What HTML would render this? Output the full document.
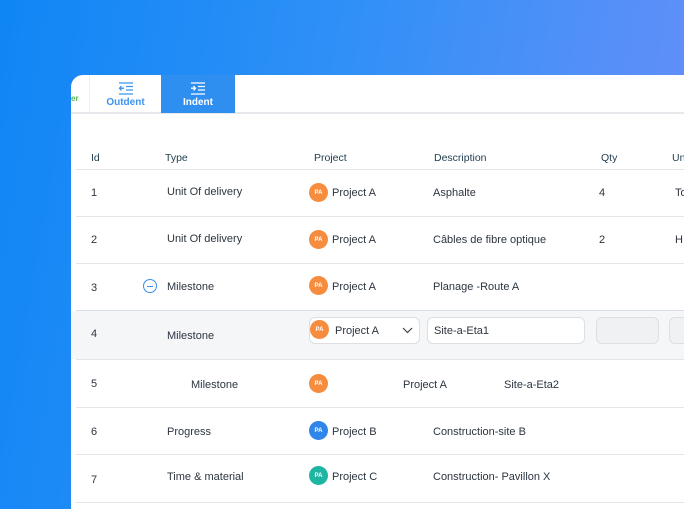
<!DOCTYPE html>
<html><head><style>
*{margin:0;padding:0;box-sizing:border-box}
html,body{width:684px;height:509px;overflow:hidden}
body{font-family:"Liberation Sans",sans-serif;background:linear-gradient(100deg,#0f86f5 0%,#2f90f7 45%,#6a8ff8 100%);position:relative}
.panel{position:absolute;left:71px;top:75px;width:613px;height:434px;background:#fff;border-top-left-radius:12px;overflow:hidden}
.tb{position:absolute;left:0;top:0;height:39px;width:640px;border-bottom:2px solid #e6e8eb}
.tab{position:absolute;top:0;height:38px;text-align:center;font-size:10px;font-weight:bold}
.t1{left:18px;width:72px;color:#3b93ee;border-left:1px solid #eceef0}
.t2{left:90px;width:74px;background:#2e8ff0;color:#fff}
.tab svg{display:block;margin:7px auto 2px}
.h{position:absolute;top:77px;font-size:10.5px;color:#1e3d4e}
.line{position:absolute;left:5px;width:640px;height:1px;background:#e3e5e8}
.c{position:absolute;font-size:11px;color:#2c3540;white-space:nowrap}
.av{position:absolute;width:19px;height:19px;border-radius:50%;color:#fff;font-size:6px;font-weight:bold;display:flex;align-items:center;justify-content:center}
.o{background:#f68c3e}.b{background:#2e86ea}.g{background:#1fb5a3}
</style></head><body>
<div class="panel">
<div class="tb">
<div style="position:absolute;left:0;top:19px;font-size:8px;color:#5ab552;font-weight:bold">er</div>
<div class="tab t1"><svg width="16" height="13" viewBox="0 0 16 13" fill="none" stroke="#3b93ee" stroke-width="1.3"><path d="M1 1h14M8 4.5h7M8 8h7M1 12h14M6 6.2H1.5M3.5 4l-2 2.2 2 2.2"/></svg>Outdent</div>
<div class="tab t2"><svg width="16" height="13" viewBox="0 0 16 13" fill="none" stroke="#fff" stroke-width="1.3"><path d="M1 1h14M8 4.5h7M8 8h7M1 12h14M1 6.2h4.5M3.5 4l2 2.2-2 2.2"/></svg>Indent</div>
</div>
<div class="h" style="left:20px">Id</div>
<div class="h" style="left:94px">Type</div>
<div class="h" style="left:243px">Project</div>
<div class="h" style="left:363px">Description</div>
<div class="h" style="left:530px">Qty</div>
<div class="h" style="left:601px">Un</div>
<div class="line" style="top:94px"></div>
<div style="position:absolute;left:0;top:236px;width:640px;height:48px;background:#f5f6f8"></div>
<div class="line" style="top:141px"></div>
<div class="line" style="top:188px"></div>
<div class="line" style="top:235px;background:#d9dde8"></div>
<div class="line" style="top:284px"></div>
<div class="line" style="top:332px"></div>
<div class="line" style="top:379px"></div>
<div class="line" style="top:427px"></div>

<div class="c" style="left:20px;top:112px">1</div><div class="c" style="left:96px;top:111px">Unit Of delivery</div>
<div class="av o" style="left:238px;top:108px">PA</div><div class="c" style="left:261px;top:112px">Project A</div><div class="c" style="left:362px;top:112px">Asphalte</div><div class="c" style="left:528px;top:112px">4</div><div class="c" style="left:604px;top:112px">To</div>

<div class="c" style="left:20px;top:159px">2</div><div class="c" style="left:96px;top:158px">Unit Of delivery</div>
<div class="av o" style="left:238px;top:155px">PA</div><div class="c" style="left:261px;top:159px">Project A</div><div class="c" style="left:362px;top:159px">Câbles de fibre optique</div><div class="c" style="left:528px;top:159px">2</div><div class="c" style="left:604px;top:159px">H</div>

<div class="c" style="left:20px;top:207px">3</div>
<div style="position:absolute;left:72px;top:204px;width:14px;height:14px;border:1px solid #3b8fe8;border-radius:50%"><div style="position:absolute;left:3px;top:6px;width:6px;height:1px;background:#3b8fe8"></div></div>
<div class="c" style="left:96px;top:206px">Milestone</div>
<div class="av o" style="left:238px;top:201px">PA</div><div class="c" style="left:261px;top:206px">Project A</div><div class="c" style="left:362px;top:206px">Planage -Route A</div>

<div class="c" style="left:20px;top:253px">4</div><div class="c" style="left:96px;top:255px">Milestone</div>
<div style="position:absolute;left:238px;top:242px;width:111px;height:27px;background:#fff;border:1px solid #dcdfe3;border-radius:6px"></div>
<div class="av o" style="left:239px;top:245px">PA</div><div class="c" style="left:264px;top:250px">Project A</div>
<svg style="position:absolute;left:331px;top:252px" width="11" height="7" viewBox="0 0 11 7" fill="none" stroke="#444" stroke-width="1.2"><path d="M1 1l4.5 4.5L10 1"/></svg>
<div style="position:absolute;left:356px;top:242px;width:158px;height:27px;background:#fff;border:1px solid #dcdfe3;border-radius:6px"></div>
<div class="c" style="left:363px;top:250px">Site-a-Eta1</div>
<div style="position:absolute;left:525px;top:242px;width:63px;height:27px;background:#eff1f3;border:1px solid #dcdfe3;border-radius:6px"></div>
<div style="position:absolute;left:598px;top:242px;width:63px;height:27px;background:#eff1f3;border:1px solid #dcdfe3;border-radius:6px"></div>

<div class="c" style="left:20px;top:303px">5</div><div class="c" style="left:120px;top:304px">Milestone</div>
<div class="av o" style="left:238px;top:299px">PA</div><div class="c" style="left:332px;top:304px">Project A</div><div class="c" style="left:433px;top:304px">Site-a-Eta2</div>

<div class="c" style="left:20px;top:351px">6</div><div class="c" style="left:96px;top:351px">Progress</div>
<div class="av b" style="left:238px;top:346px">PA</div><div class="c" style="left:261px;top:351px">Project B</div><div class="c" style="left:362px;top:351px">Construction-site B</div>

<div class="c" style="left:20px;top:399px">7</div><div class="c" style="left:96px;top:396px">Time &amp; material</div>
<div class="av g" style="left:238px;top:391px">PA</div><div class="c" style="left:261px;top:396px">Project C</div><div class="c" style="left:362px;top:396px">Construction- Pavillon X</div>
</div>
</body></html>
